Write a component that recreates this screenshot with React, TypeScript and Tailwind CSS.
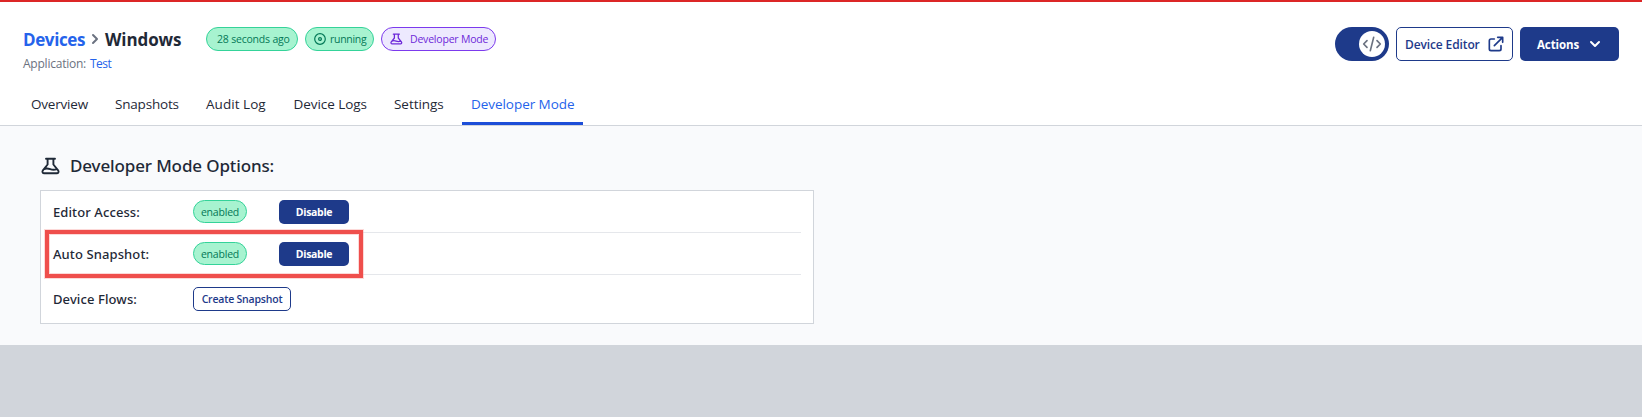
import type { ReactNode } from 'react'

function Beaker({ className }: { className: string }) {
  return (
    <svg className={className} viewBox="0 0 24 24" fill="none" stroke="currentColor" strokeWidth="1.9" strokeLinecap="round" strokeLinejoin="round">
      <path d="M8 4.8h9M9.6 4.8v5.7L4.9 16.3c-1 1.4-.3 3 1.4 3h12.4c1.7 0 2.4-1.6 1.4-3l-4.7-5.8V4.8M6 15.2c2-1 4-.8 6.200 0s4.400.8 6.800 0" />
    </svg>
  )
}

function Pill({ className, children }: { className: string; children: ReactNode }) {
  return (
    <div className={`flex shrink-0 items-center rounded-full border text-[10.5px] leading-4 tracking-[-0.2px] ${className}`}>
      {children}
    </div>
  )
}

const green = 'border-[#34d399] bg-[#a7f3d0] text-[#047857]'

const tabs = [
  { label: 'Overview', className: 'w-[84px] tracking-[-0.2px]' },
  { label: 'Snapshots', className: 'w-[91px] tracking-[-0.2px]' },
  { label: 'Audit Log', className: 'w-[87.5px] tracking-[0.05px]' },
  { label: 'Device Logs', className: 'w-[100.5px] tracking-[-0.05px]' },
  { label: 'Settings', className: 'w-[77px] tracking-[-0.05px]' },
]

function RowLabel({ children }: { children: ReactNode }) {
  return <div className="w-[140px] pt-px font-['Noto_Sans',sans-serif] text-[13px] leading-[22px] font-medium tracking-[0.1px]">{children}</div>
}

function ToggleRow({ label, className }: { label: string; className: string }) {
  return (
    <div className={`flex border-b border-[#e5e7eb] ${className}`}>
      <RowLabel>{label}</RowLabel>
      <Pill className={`h-[23px] w-[54px] justify-center ${green}`}>enabled</Pill>
      <button className="ml-8 h-6 w-[70px] rounded-[5px] bg-[#1e3a8a] text-[10.5px] leading-6 font-bold tracking-[-0.3px] text-white">
        Disable
      </button>
    </div>
  )
}

export default function App() {
  return (
    <div className="h-[417px] w-[1642px] overflow-hidden bg-[#d1d5db] font-['Open_Sans',sans-serif] whitespace-nowrap text-[#1f2937]">
      <header className="flex h-[126px] flex-col border-t-2 border-b border-t-[#dc2626] border-b-[#d1d5db] bg-white">
        <div className="flex h-[75px] items-start pr-[23px] pl-[23px]">
          <div className="w-[183px] pt-[26px]">
            <div className="flex h-6 items-center text-[17px] leading-6 font-bold">
              <a className="w-[62px] tracking-[-0.38px] text-[#2563eb]">Devices</a>
              <svg className="-mt-0.5 h-5 w-5 text-[#6b7280]" viewBox="0 0 20 20" fill="currentColor">
                <path d="M7.293 14.707a1 1 0 010-1.414L10.586 10 7.293 6.707a1 1 0 011.414-1.414l4 4a1 1 0 010 1.414l-4 4a1 1 0 01-1.414 0z" />
              </svg>
              <span className="tracking-[-0.1px]">Windows</span>
            </div>
            <div className="flex h-6 items-center text-[12px] tracking-[-0.23px] text-[#6b7280]">
              <span className="w-[67px]">Application:</span>
              <a className="tracking-[-0.55px] text-[#2563eb]">Test</a>
            </div>
          </div>
          <div className="flex pt-[25px]">
            <Pill className={`h-6 w-[92px] pl-[10px] ${green}`}>28 seconds ago</Pill>
            <Pill className={`ml-[7px] h-6 w-[69px] pl-2 ${green}`}>
              <svg className="mr-1 h-3 w-3" viewBox="0 0 12 12" fill="none" stroke="currentColor">
                <circle cx="6" cy="6" r="5.3" strokeWidth="1.2" />
                <circle cx="6" cy="6" r="1.4" strokeWidth="1.2" />
              </svg>
              <span className="tracking-[-0.3px]">running</span>
            </Pill>
            <Pill className="ml-[7px] h-6 w-[115px] border-[#7c3aed] bg-[#ede9fe] pl-[6px] text-[#6d28d9]">
              <Beaker className="mr-[6px] h-4 w-4" />
              Developer Mode
            </Pill>
          </div>
          <div className="ml-auto flex pt-[25px]">
            <div className="flex h-[34px] w-[54px] items-center justify-end rounded-full bg-[#1e3a8a] pr-1">
              <div className="flex h-[26px] w-[26px] items-center justify-center rounded-full bg-white text-[#6b7280]">
                <svg className="h-5 w-5" viewBox="0 0 24 24" fill="none" stroke="currentColor" strokeWidth="2" strokeLinecap="round" strokeLinejoin="round">
                  <path d="M10 20l4-16m4 4l4 4-4 4M6 16l-4-4 4-4" />
                </svg>
              </div>
            </div>
            <button className="ml-[7px] flex h-[34px] w-[117px] items-center rounded-[5px] border border-[#1e3a8a] pt-px pl-[8px] text-[12px] font-semibold tracking-[-0.12px] text-[#1e3a8a]">
              <span className="w-[81px] text-left">Device Editor</span>
              <svg className="-mt-px h-5 w-5" viewBox="0 0 24 24" fill="none" stroke="currentColor" strokeWidth="2" strokeLinecap="round" strokeLinejoin="round">
                <path d="M10 6H6a2 2 0 00-2 2v10a2 2 0 002 2h10a2 2 0 002-2v-4M14 4h6m0 0v6m0-6L10 14" />
              </svg>
            </button>
            <button className="ml-[7px] flex h-[34px] w-[99px] items-center rounded-[5px] bg-[#1e3a8a] pl-[17px] text-[11.5px] font-bold tracking-[-0.1px] text-white">
              <span className="w-[48px] pt-px text-left">Actions</span>
              <svg className="h-5 w-5" viewBox="0 0 20 20" fill="currentColor">
                <path d="M5.293 7.293a1 1 0 011.414 0L10 10.586l3.293-3.293a1 1 0 111.414 1.414l-4 4a1 1 0 01-1.414 0l-4-4a1 1 0 010-1.414z" />
              </svg>
            </button>
          </div>
        </div>
        <nav className="flex h-12 pl-[31px] text-[13.5px] leading-[54px]">
          {tabs.map((tab) => (
            <a key={tab.label} className={tab.className}>{tab.label}</a>
          ))}
          <a className="-ml-[9px] h-12 w-[121px] border-b-[3px] border-[#1d4ed8] pl-[9px] tracking-[-0.05px] text-[#2563eb]">Developer Mode</a>
        </nav>
      </header>
      <main className="h-[219px] bg-[#f9fafc] pt-[26px] pl-[38px]">
        <div className="flex h-7 items-center">
          <Beaker className="mr-2 h-6 w-6" />
          <h1 className="font-['Noto_Sans',sans-serif] text-[17px] font-medium tracking-[-0.13px]">Developer Mode Options:</h1>
        </div>
        <section className="relative mt-[10px] ml-[2px] h-[134px] w-[774px] border border-[#d1d5db] bg-white px-3">
          <ToggleRow label="Editor Access:" className="h-[42px] pt-[9px]" />
          <ToggleRow label="Auto Snapshot:" className="h-[42px] pt-[9px]" />
          <div className="flex pt-3">
            <RowLabel>Device Flows:</RowLabel>
            <button className="h-6 w-[98px] rounded-[5px] border border-[#1e3a8a] text-[10.5px] leading-[22px] font-semibold tracking-[-0.2px] text-[#1e3a8a]">
              Create Snapshot
            </button>
          </div>
          <div className="absolute top-[39px] left-1 h-[48px] w-[318px] border-4 border-[#ef4f4c] shadow-[0_0_0_1px_rgba(248,160,158,0.4),inset_0_0_0_1px_rgba(248,160,158,0.4)]" />
        </section>
      </main>
    </div>
  )
}
